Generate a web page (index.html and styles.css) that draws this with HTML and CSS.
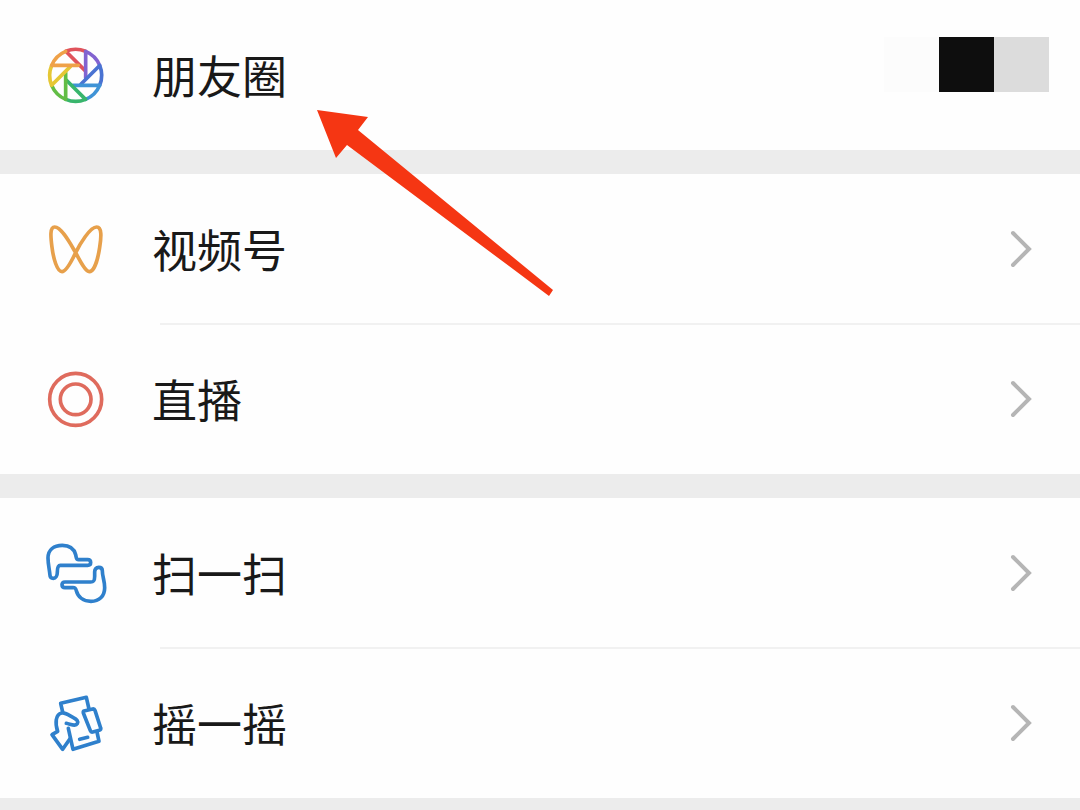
FILE: index.html
```html
<!DOCTYPE html>
<html lang="zh-CN">
<head>
<meta charset="utf-8">
<meta name="viewport" content="width=device-width, initial-scale=1">
<title>发现</title>
<link rel="stylesheet" href="styles.css">
</head>
<body>
<main class="discover">
  <nav class="group">
    <a class="row" href="#moments">
      <svg class="icon" viewBox="-107 -109 216 216" aria-hidden="true">
        <defs><path id="blade" d="M30 8V-72A78 78 0 0 1 72 -30"/></defs>
        <g class="stroke">
          <use href="#blade" stroke="#e0535b" transform="rotate(315)"/>
          <use href="#blade" stroke="#8263d0"/>
          <use href="#blade" stroke="#4a73d2" transform="rotate(45)"/>
          <use href="#blade" stroke="#3f93d6" transform="rotate(90)"/>
          <use href="#blade" stroke="#38b56c" transform="rotate(135)"/>
          <use href="#blade" stroke="#62bd45" transform="rotate(180)"/>
          <use href="#blade" stroke="#e5c735" transform="rotate(225)"/>
          <use href="#blade" stroke="#efa148" transform="rotate(270)"/>
        </g>
      </svg>
      <span class="label">朋友圈</span>
      <span class="preview"><i class="tile tile-faint"></i><i class="tile tile-dark"></i><i class="tile tile-gray"></i></span>
    </a>
  </nav>
  <nav class="group">
    <a class="row" href="#channels">
      <svg class="icon" viewBox="0 0 216 216" aria-hidden="true">
        <path class="stroke orange" d="M107 119C92 94 65 42 44 42C29 42 32 72 36 103C40 135 51 176 66 176C78 176 95 144 107 119C119 94 150 42 170 42C186 42 184 72 179 103C174 137 163 176 148 176C137 176 121 146 107 119Z"/>
      </svg>
      <span class="label">视频号</span>
      <svg class="chevron" viewBox="0 0 24 40" aria-hidden="true"><path d="M4 4L20 20L4 36"/></svg>
    </a>
    <a class="row" href="#live">
      <svg class="icon" viewBox="0 0 216 216" aria-hidden="true">
        <g class="stroke red"><circle cx="107" cy="109" r="78"/><circle cx="107" cy="109" r="46"/></g>
      </svg>
      <span class="label">直播</span>
      <svg class="chevron" viewBox="0 0 24 40" aria-hidden="true"><path d="M4 4L20 20L4 36"/></svg>
    </a>
  </nav>
  <nav class="group">
    <a class="row" href="#scan">
      <svg class="icon" viewBox="0 -3 216 216" aria-hidden="true">
        <g class="stroke blue">
          <path d="M30 112C28 92 24 78 24 60C24 35 42 22 67 22C91 22 103 35 107 50C109 58 108 65 116 65H143C155 65 155 82 143 82H61C53 82 52 91 52 102C52 113 47 121 40 121C33 121 30 118 30 112Z"/>
          <path d="M187 98C187 117 194 127 194 149C194 175 177 190 153 190C130 190 114 177 109 158C107 151 106 149 99 149H75C63 149 63 132 75 132H152C163 132 164 126 164 115V101C164 93 169 88 176 88C183 88 187 92 187 98Z"/>
        </g>
      </svg>
      <span class="label">扫一扫</span>
      <svg class="chevron" viewBox="0 0 24 40" aria-hidden="true"><path d="M4 4L20 20L4 36"/></svg>
    </a>
    <a class="row" href="#shake">
      <svg class="icon" viewBox="0 -3 216 216" aria-hidden="true">
        <g class="stroke blue">
          <path d="M68 72L62 46L139 28L147 63"/>
          <path d="M132 69L158 63Q163 62 165 67L182 120Q184 125 178 127L158 132Q153 133 151 128L130 75Q129 70 132 69Z"/>
          <path d="M171 132L177 160L99 184L85 121"/>
          <path d="M90 152L68 184L36 140L53 130C45 107 46 79 65 75C76 73 88 83 100 89C110 94 116 100 112 107C107 116 96 110 79 106"/>
          <path d="M119 154L143 148"/>
        </g>
      </svg>
      <span class="label">摇一摇</span>
      <svg class="chevron" viewBox="0 0 24 40" aria-hidden="true"><path d="M4 4L20 20L4 36"/></svg>
    </a>
  </nav>
  <svg class="pointer" viewBox="0 0 238 188" aria-hidden="true">
    <path d="M1 1L52 8L42 21L237 181L233 187L31 36L20 49Z"/>
  </svg>
</main>
</body>
</html>
```
FILE: styles.css
```css
* {
  box-sizing: border-box;
}

body {
  margin: 0;
  background: #ececec;
  color: #191919;
  font-family: "Noto Sans CJK SC", sans-serif;
}

.discover {
  position: relative;
  display: flex;
  flex-direction: column;
  gap: 24px;
  padding-bottom: 12px;
}

.group {
  background: #fefefe;
}

.row {
  position: relative;
  display: flex;
  align-items: center;
  height: 150px;
  padding: 0 47px 0 40px;
  color: inherit;
  text-decoration: none;
}

.row + .row::before {
  content: "";
  position: absolute;
  top: -1px;
  left: 160px;
  right: 0;
  height: 2px;
  background: #f1f1f1;
}

.icon {
  width: 72px;
  height: 72px;
  margin-right: 40px;
  flex: none;
}

.stroke {
  fill: none;
  stroke-width: 11px;
  stroke-linecap: round;
  stroke-linejoin: round;
}

.orange {
  stroke: #e7a04b;
}

.red {
  stroke: #df6b5d;
}

.blue {
  stroke: #2f80cc;
}

.label {
  flex: 1;
  font-size: 45px;
  line-height: 64px;
}

.chevron {
  width: 24px;
  height: 40px;
  fill: none;
  stroke: #b5b5b5;
  stroke-width: 4px;
  stroke-linecap: round;
}

.preview {
  display: flex;
  align-self: flex-start;
  margin: 37px -16px 0 0;
}

.tile {
  width: 55px;
  height: 55px;
}

.tile-faint {
  background: #fcfcfc;
}

.tile-dark {
  background: #0e0e0e;
}

.tile-gray {
  background: #dcdcdc;
}

.pointer {
  position: absolute;
  top: 109px;
  left: 316px;
  width: 238px;
  height: 188px;
  fill: #f53613;
}
```
